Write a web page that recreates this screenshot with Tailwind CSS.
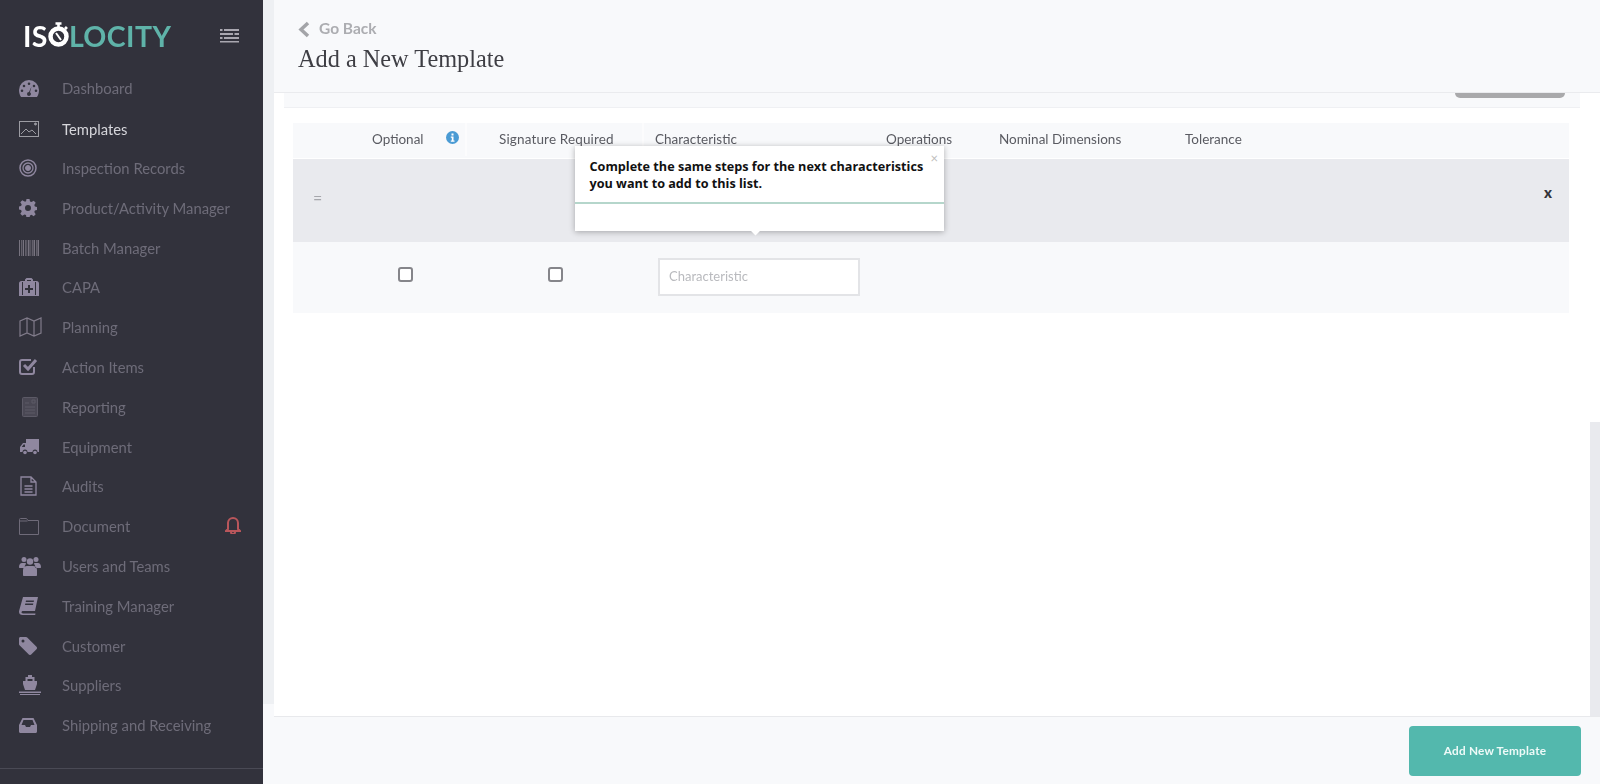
<!DOCTYPE html>
<html lang="en">

<head>
    <meta charset="UTF-8">
    <meta name="viewport" content="width=device-width, initial-scale=1.0">
    <title>Add a New Template</title>
    <script src="https://cdn.jsdelivr.net/npm/@tailwindcss/browser@4"></script>
</head>

<body class="w-full h-screen overflow-hidden bg-white flex font-['Lato','Liberation_Sans',sans-serif]">

    <!-- sidebar -->
    <aside class="w-[263px] h-[784px] shrink-0 bg-[#32323c] flex flex-col relative">
        <div class="h-[68px] pl-[23px] pr-[24px] pt-[19px] flex justify-between blur-[0.5px]">
            <div class="flex items-center h-[34px] text-[28.500px] font-bold tracking-[0.4px] leading-none">
                <span class="text-white">IS</span>
                <svg class="w-[21px] h-[25px] mb-[3px]" viewBox="0 0 21 25" fill="none">
                    <circle cx="10.500" cy="14.500" r="8" stroke="#fff" stroke-width="4.500" />
                    <path d="M7.500 1.500h6M10.500 1.500v4M17 5l2 2" stroke="#fff" stroke-width="2.600" />
                    <path d="M8 11l5 7" stroke="#fff" stroke-width="2" />
                </svg>
                <span class="text-[#5fb3a9]">LOCITY</span>
            </div>
            <svg class="w-[19px] h-[14px] mt-[10px]" viewBox="0 0 19 14" fill="#a9a7b0">
                <rect x="4" y="0" width="15" height="2" />
                <rect x="0" y="0" width="2.5" height="2" />
                <rect x="0" y="4" width="13" height="2" />
                <rect x="14.500" y="4" width="4.500" height="2" />
                <rect x="4" y="8" width="15" height="2" />
                <rect x="0" y="8" width="2.500" height="2" />
                <rect x="0" y="12" width="19" height="1.500" />
            </svg>
        </div>

        <nav class="flex flex-col pl-[19px] pt-[0.5px] text-[14.800px] leading-[20px] text-[#6e6c79] blur-[0.5px]">
            <a class="h-[39.8px] flex items-center">
                <svg class="w-[20px] h-[17px] mr-[23px]" viewBox="0 0 20 17" fill="#8f879f"><path fill-rule="evenodd" d="M0 10a10 10 0 0 1 20 0c0 2.700-.7 5-2 7H2C.7 15 0 12.700 0 10zM10 5a1.300 1.300 0 1 0 0-2.600A1.300 1.300 0 0 0 10 5zM5 7.300a1.300 1.300 0 1 0 0-2.600 1.300 1.300 0 0 0 0 2.600zM15 7.300a1.300 1.300 0 1 0 0-2.600 1.300 1.300 0 0 0 0 2.600zM3 12a1.300 1.300 0 1 0 0-2.600A1.300 1.300 0 0 0 3 12zM17 12a1.300 1.300 0 1 0 0-2.600 1.300 1.300 0 0 0 0 2.600zM10 16a2 2 0 0 0 1-3.700L12.500 6.500l-2.500 5.500a2 2 0 0 0 0 4z"/></svg>
                Dashboard
            </a>
            <a class="h-[39.8px] flex items-center text-[#d6d6db] pt-[2px]">
                <svg class="w-[20px] h-[16px] mr-[23px]" viewBox="0 0 20 16" fill="none" stroke="#9c9ca3"><rect x=".5" y=".5" width="19" height="15" /><path d="M2 13l5-5 3 3 3-2 4 4" /><circle cx="16.500" cy="3" r="1" fill="#9c9ca3" /></svg>
                Templates
            </a>
            <a class="h-[39.8px] flex items-center">
                <svg class="w-[18px] h-[18px] mr-[25px]" viewBox="0 0 18 18" fill="none" stroke="#8f879f"><circle cx="9" cy="9" r="8" stroke-width="1.500" /><circle cx="9" cy="9" r="5" stroke-width="1.300" /><circle cx="9" cy="9" r="2.500" fill="#8f879f" /></svg>
                Inspection Records
            </a>
            <a class="h-[39.8px] flex items-center">
                <svg class="w-[18px] h-[18px] mr-[25px]" viewBox="0 0 18 18" fill="#8f879f"><path fill-rule="evenodd" d="M7.500 0h3l.5 2.500 1.500.6L14.700 1.700l2 2-1.400 2.200.6 1.600 2.100.5v3l-2.100.5-.6 1.500 1.400 2.200-2 2-2.200-1.400-1.500.6-.5 2.600h-3L7 16l-1.500-.6-2.200 1.400-2-2 1.400-2.200-.6-1.500-2.100-.6v-3l2.100-.5.6-1.600-1.400-2.200 2-2 2.200 1.400L7 2.500zM9 6a3 3 0 1 0 0 6 3 3 0 0 0 0-6z"/></svg>
                Product/Activity Manager
            </a>
            <a class="h-[39.8px] flex items-center">
                <svg class="w-[20px] h-[16px] mr-[23px]" viewBox="0 0 20 16" fill="#77737f"><path d="M0 0h1v16H0zM2 0h.7v16H2zM3.700 0h1.300v16H3.700zM6 0h.7v16H6zM7.500 0h.7v16h-.7zM9 0h1.500v16H9zM11.500 0h.7v16h-.7zM13 0h.7v16H13zM14.500 0h1.500v16h-1.500zM17 0h.7v16H17zM18.500 0H20v16h-1.500z"/></svg>
                Batch Manager
            </a>
            <a class="h-[39.8px] flex items-center">
                <svg class="w-[20px] h-[18px] mr-[23px]" viewBox="0 0 20 18" fill="#8f879f"><path fill-rule="evenodd" d="M6 3V1.500L7.500 0h5L14 1.500V3h3.500c1.500 0 2.500 1 2.500 2.500V18H0V5.500C0 4 1 3 2.500 3zM8 3h4V2H8zM4 4H3v13h1zM17 4h-1v13h1zM9 7v3H6v2h3v3h2v-3h3v-2h-3V7z"/></svg>
                CAPA
            </a>
            <a class="h-[39.8px] flex items-center">
                <svg class="w-[23px] h-[20px] mr-[20px]" viewBox="0 0 23 20" fill="none" stroke="#807b8a" stroke-width="1.200"><path d="M1 4l7-3 7 3 7-3v15l-7 3-7-3-7 3zM8 1v15M15 4v15" /></svg>
                Planning
            </a>
            <a class="h-[39.8px] flex items-center">
                <svg class="w-[19px] h-[17px] mr-[24px]" viewBox="0 0 19 17" fill="none" stroke="#8f879f" stroke-width="2"><path d="M15 9v5a2 2 0 0 1-2 2H3a2 2 0 0 1-2-2V4a2 2 0 0 1 2-2h9" /><path stroke-width="3" d="M5 7l4 4 8-9" /></svg>
                Action Items
            </a>
            <a class="h-[39.8px] flex items-center">
                <svg class="w-[16px] h-[20px] mr-[24px] ml-[3px]" viewBox="0 0 16 20" fill="none" stroke="#5c5a66"><rect x=".5" y=".5" width="15" height="19" rx="1" fill="#4a4854" /><path d="M3 6h4M10 3h3v3h-3zM3 10h10M3 13h10M3 16h10" /></svg>
                Reporting
            </a>
            <a class="h-[39.8px] flex items-center">
                <svg class="w-[19px] h-[16px] mr-[23px] ml-[1px]" viewBox="0 0 19 16" fill="#8f879f"><path fill-rule="evenodd" d="M6 0h13v13h-1.500a2.500 2.500 0 0 0-5 0H7.500a2.500 2.500 0 0 0-5 0H0V8l3-4h3zM5 5.500H3.500L1.800 8H5z"/><circle cx="5" cy="13.500" r="1.800"/><circle cx="15" cy="13.500" r="1.800"/></svg>
                Equipment
            </a>
            <a class="h-[39.8px] flex items-center">
                <svg class="w-[17px] h-[20px] mr-[25px] ml-[1px]" viewBox="0 0 17 20" fill="none" stroke="#8f879f" stroke-width="1.300"><path d="M1 1h10l5 5v13H1zM11 1v5h5M4.500 10h8M4.500 13h8M4.500 16h8" /></svg>
                Audits
            </a>
            <a class="h-[39.8px] flex items-center relative">
                <svg class="w-[20px] h-[17px] mr-[23px]" viewBox="0 0 20 17" fill="none" stroke="#6f6b79"><path d="M.5 16.500V1.500a1 1 0 0 1 1-1h6l1.500 2h10.500v14z M.5 3h8" /></svg>
                Document
                <svg class="w-[16px] h-[18px] absolute left-[206px] top-[10px]" viewBox="0 0 16 18" fill="none" stroke="#b9565b" stroke-width="2"><path d="M3 13V7a5 5 0 0 1 10 0v6l2 2H1zM6 16a2 2 0 0 0 4 0" /></svg>
            </a>
            <a class="h-[39.8px] flex items-center">
                <svg class="w-[22px] h-[20px] mr-[21px]" viewBox="0 0 22 20" fill="#8f879f"><circle cx="5" cy="3.500" r="2.500"/><circle cx="17" cy="3.500" r="2.500"/><circle cx="11" cy="5.500" r="3.200"/><path d="M0 11c0-2.500 1.500-4 3-4h3c.7 0 1 .3 1 1-1 1-1.500 2-1.500 4H1c-.7 0-1-.4-1-1zM22 11c0-2.500-1.500-4-3-4h-3c-.7 0-1 .3-1 1 1 1 1.500 2 1.500 4H21c.7 0 1-.4 1-1zM4 19v-5c0-2.500 2-4 4-4h6c2 0 4 1.500 4 4v5c0 .6-.4 1-1 1H5c-.6 0-1-.4-1-1z"/></svg>
                Users and Teams
            </a>
            <a class="h-[39.8px] flex items-center">
                <svg class="w-[19px] h-[18px] mr-[24px]" viewBox="0 0 19 18" fill="#8f879f"><path fill-rule="evenodd" d="M4 0h15l-3 14H4c-1 0-1.500.6-1.500 1.300S3 16.500 4 16.500h12.500l-.3 1.500H3.500C1.500 18 0 17 0 15c0-.5 0-1 .2-1.500zM7 3.500l-.3 1.500h8l.3-1.500zM6.300 6.500 6 8h8l.3-1.500z"/></svg>
                Training Manager
            </a>
            <a class="h-[39.8px] flex items-center">
                <svg class="w-[18px] h-[18px] mr-[25px]" viewBox="0 0 18 18" fill="#8f879f"><path fill-rule="evenodd" d="M0 1.500C0 .6.600 0 1.500 0H7c.5 0 .9.200 1.200.5l9.300 9.300c.7.700.7 1.700 0 2.400l-5.300 5.300c-.7.700-1.700.7-2.400 0L.5 8.200C.2 7.900 0 7.500 0 7zM4 5.500a1.500 1.500 0 1 0 0-3 1.500 1.500 0 0 0 0 3z"/></svg>
                Customer
            </a>
            <a class="h-[39.8px] flex items-center">
                <svg class="w-[22px] h-[20px] mr-[21px]" viewBox="0 0 22 20" fill="#8f879f"><path fill-rule="evenodd" d="M9 0h4v2h2.500v4H18v3l-2 6H6L4 9V6h2.500V2H9zM8.500 4v2h5V4z"/><path d="M0 16.500h22V18H0zM1 19h20v1H1z"/></svg>
                Suppliers
            </a>
            <a class="h-[39.8px] flex items-center">
                <svg class="w-[18px] h-[15px] mr-[25px]" viewBox="0 0 18 15" fill="#8f879f"><path fill-rule="evenodd" d="M3.500 0h11L18 7v6.500c0 .9-.6 1.500-1.500 1.500h-15C.6 15 0 14.400 0 13.500V7zM4.500 2 2.500 7H6l1 2h4l1-2h3.500l-2-5z"/></svg>
                Shipping and Receiving
            </a>
        </nav>
        <div class="absolute left-0 right-0 top-[768px] border-t border-[#4a4a55]"></div>
    </aside>

    <!-- thin strip between sidebar and page -->
    <div class="w-[11px] h-[784px] shrink-0 flex flex-col">
        <div class="h-[704px] bg-[#eef0f3]"></div>
        <div class="flex-1 bg-[#f8f9fb]"></div>
    </div>

    <main class="flex-1 h-[784px] flex flex-col min-w-0 relative">
        <header class="h-[93px] shrink-0 bg-[#f8f9fb] border-b border-[#eaebee] pl-[24px] pt-[19px] relative z-10">
            <div class="flex items-center h-[20px] gap-[9px]">
                <svg class="w-[12px] h-[17px]" viewBox="0 0 12 17" fill="none" stroke="#a3a4a8" stroke-width="3.500"><path d="M10 2 3 8.500l7 6.500" /></svg>
                <span class="text-[15.500px] font-bold text-[#acadb1] blur-[0.4px]">Go Back</span>
            </div>
            <h1 class="mt-[4px] text-[24.300px] leading-[32px] text-[#3e3e44] font-['Liberation_Serif',serif] blur-[0.3px]">Add a New Template</h1>
        </header>

        <div class="flex-1 flex min-h-0">
            <div class="flex-1 min-w-0 pl-[10px] pr-[10px]">
                <div class="h-[15px] w-[1296px] bg-[#f8f9fb] border-b border-[#eff0f3] relative">
                    <div class="absolute right-[15px] top-0 w-[110px] h-[5px] bg-[#a9a9ab] rounded-b-[8px]"></div>
                </div>

                <div class="ml-[9px] mt-[15px] w-[1276px] text-[13.500px] text-[#5a5b62]">
                    <div class="h-[35px] flex items-center bg-[#f8f9fb] pb-[2px] blur-[0.4px]">
                        <div class="w-[50px]"></div>
                        <div class="w-[124px] h-full flex items-center pl-[29px] border-r-2 border-[#fcfcfd] relative">Optional
                            <svg class="w-[13px] h-[13px] absolute left-[103px] top-[8px]" viewBox="0 0 13 13"><circle cx="6.500" cy="6.500" r="6.500" fill="#4a9bd4" /><rect x="5.500" y="2.500" width="2" height="2" fill="#fff" /><path d="M4.800 5.500h2.700v4h1v1.200H4.800V9.500h1V6.700h-1z" fill="#fff" /></svg>
                        </div>
                        <div class="w-[177px] h-full flex items-center pl-[32px] border-r-2 border-[#fcfcfd] tracking-[0.15px]">Signature Required</div>
                        <div class="w-[229px] h-full flex items-center pl-[11px]">Characteristic</div>
                        <div class="w-[112px] h-full flex items-center pl-[13px]">Operations</div>
                        <div class="w-[187px] h-full flex items-center pl-[14px]">Nominal Dimensions</div>
                        <div class="w-[356px] h-full flex items-center pl-[13px]">Tolerance</div>
                    </div>
                    <div class="mt-[1px] h-[83px] bg-[#e9eaee] flex items-center justify-between pl-[20px] pr-[17px]">
                        <span class="text-[#a6a7ac] text-[16px] mt-[-6px] blur-[0.3px]">=</span>
                        <span class="text-[#33343a] font-black text-[15px] mt-[-16px]">x</span>
                    </div>
                    <div class="h-[71px] bg-[#f8f9fb] flex items-start">
                        <div class="w-[105px] shrink-0"></div>
                        <div class="w-[15px] h-[15px] mt-[25px] shrink-0 border-2 border-[#85858a] rounded-[3px] bg-white"></div>
                        <div class="w-[135px] shrink-0"></div>
                        <div class="w-[15px] h-[15px] mt-[25px] shrink-0 border-2 border-[#85858a] rounded-[3px] bg-white"></div>
                        <div class="w-[95px] shrink-0"></div>
                        <div class="w-[202px] h-[38px] mt-[16px] shrink-0 bg-white border-2 border-[#e3e4e7] pl-[9px] flex items-center text-[13px] text-[#b9babe] blur-[0.3px]">Characteristic</div>
                    </div>
                </div>
            </div>
            <div class="w-[10px] shrink-0 flex flex-col">
                <div class="h-[329px] bg-white"></div>
                <div class="flex-1 bg-[#e9eaee]"></div>
            </div>
        </div>

        <footer class="h-[68px] shrink-0 bg-[#f8f9fb] border-t border-[#e8e9ec] flex justify-end items-start pt-[9px] pr-[19px]">
            <button class="w-[172px] h-[50px] rounded-[4px] bg-[#53b8ad] text-[#eefaf8] text-[11.800px] font-bold tracking-[0.2px] blur-[0.3px]">Add New Template</button>
        </footer>

        <!-- walkthrough tooltip -->
        <div class="absolute left-[301px] top-[146px] w-[369px] h-[85px] bg-white shadow-[0_1px_6px_rgba(0,0,0,0.3)] z-20">
            <div class="h-[58px] pt-[12px] pl-[14.500px] border-b-2 border-[#b5d6cb] text-[12.650px] leading-[17px] font-bold text-[#111] font-['Open_Sans',sans-serif]">Complete the same steps for the next characteristics<br>you want to add to this list.</div>
            <span class="absolute right-[6px] top-[5px] text-[13px] leading-[14px] text-[#bdbdbd]">×</span>
            <div class="absolute left-[177px] bottom-[-3px] w-[7px] h-[7px] bg-white rotate-45"></div>
        </div>
    </main>

</body>

</html>
